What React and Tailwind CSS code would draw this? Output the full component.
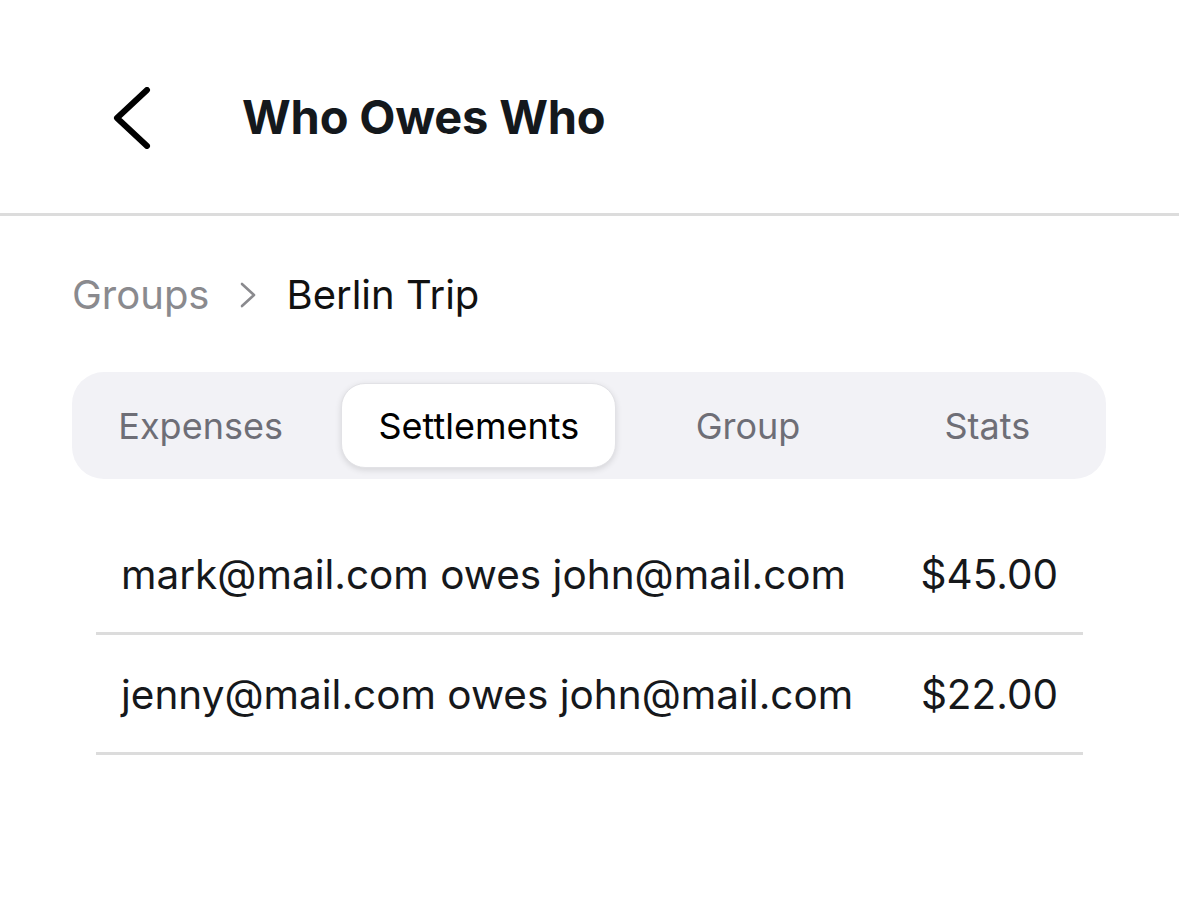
import { useState } from "react";

const tabs = [
    { label: "Expenses", w: "w-[236px]" },
    { label: "Settlements", w: "w-[276px]" },
    { label: "Group", w: "w-[218px]" },
    { label: "Stats", w: "w-[216px]" },
];

const settlements = [
    { from: "mark@mail.com", to: "john@mail.com", amount: "$45.00" },
    { from: "jenny@mail.com", to: "john@mail.com", amount: "$22.00" },
];

function BackIcon() {
    return (
        <svg width="40" height="62" viewBox="0 0 40 62" fill="none">
            <polyline points="35,3 5,31 35,59" stroke="#000" strokeWidth="6" strokeLinecap="round" strokeLinejoin="round" />
        </svg>
    );
}

function Chevron() {
    return (
        <svg width="18" height="26" viewBox="0 0 18 26" fill="none">
            <polyline points="3,2 15,13 3,24" stroke="#8a8a8e" strokeWidth="2.6" strokeLinecap="round" strokeLinejoin="round" />
        </svg>
    );
}

function App() {
    const [active, setActive] = useState("Settlements");

    return (
        <div className="min-h-screen bg-white font-['Inter','Noto_Sans',sans-serif]">
            <header className="flex items-center h-[216px] pt-[22px] border-b-[3px] border-[#dcdcdc] pl-[112px]">
                <button className="flex items-center">
                    <BackIcon />
                </button>
                <h1 className="ml-[90px] text-[47px] font-bold text-[#14181c] tracking-[-0.2px]">Who Owes Who</h1>
            </header>

            <main className="px-[72px]">
                <nav className="flex items-center h-[50px] mt-[54px] text-[40px]">
                    <span className="text-[#8a8a8e]">Groups</span>
                    <span className="ml-[30px] mr-[29px] flex items-center">
                        <Chevron />
                    </span>
                    <span className="text-[#111]">Berlin Trip</span>
                </nav>

                <div className="mt-[52px] flex items-center gap-[23px] h-[107px] w-[1034px] rounded-[32px] bg-[#f2f2f6] px-[11px]">
                    {tabs.map((t) => (
                        <button
                            key={t.label}
                            onClick={() => setActive(t.label)}
                            className={`${t.w} h-[85px] flex items-center justify-center rounded-[24px] text-[36px] ${
                                active === t.label
                                    ? "bg-white text-black shadow-[0_2px_6px_rgba(0,0,0,0.12)] border border-[#e2e2e6]"
                                    : "text-[#6e6e76]"
                            }`}
                        >
                            {t.label}
                        </button>
                    ))}
                </div>

                <div className="mt-[36px] mx-[24px] w-[987px]">
                    {settlements.map((s) => (
                        <div
                            key={s.from}
                            className="flex items-center justify-between h-[120px] pt-[4px] border-b-[3px] border-[#dcdcdc] px-[25px] text-[40.5px] text-[#16181b]"
                        >
                            <span>
                                {s.from} owes {s.to}
                            </span>
                            <span>{s.amount}</span>
                        </div>
                    ))}
                </div>
            </main>
        </div>
    );
}

export default App;
